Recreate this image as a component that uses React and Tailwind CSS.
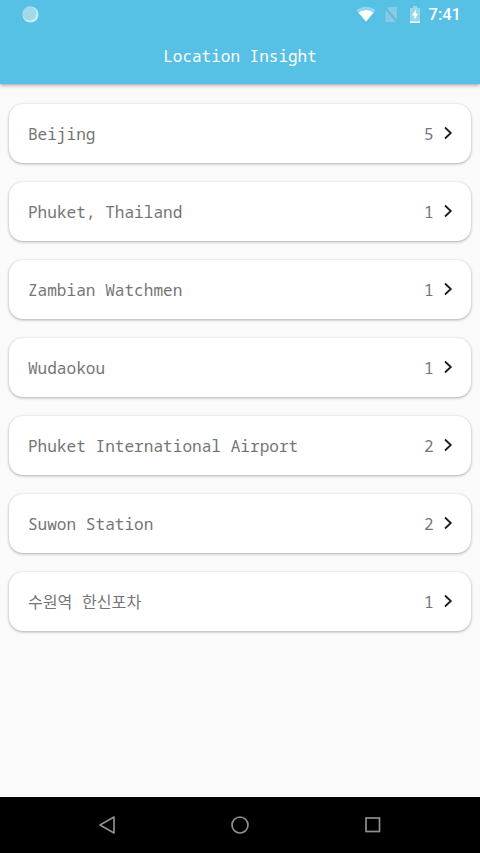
const locations = [
  { name: "Beijing", count: 5 },
  { name: "Phuket, Thailand", count: 1 },
  { name: "Zambian Watchmen", count: 1 },
  { name: "Wudaokou", count: 1 },
  { name: "Phuket International Airport", count: 2 },
  { name: "Suwon Station", count: 2 },
  { name: "수원역 한신포차", count: 1 },
];

function StatusBar() {
  return (
    <div className="flex h-7 items-center justify-between pl-[22px] pr-[19px]">
      <svg width="17" height="17" viewBox="0 0 17 17">
        <circle cx="8.5" cy="8.5" r="8" fill="#c4f1f9" />
        <circle cx="7.6" cy="7.6" r="7" fill="#a3d8e9" />
      </svg>

      <div className="flex items-center">
        {/* Wifi */}
        <svg width="20" height="16" viewBox="0 0 20 16" className="mr-2">
          <path d="M.5 4.2C3.2 2 6.4.8 10 .8s6.8 1.2 9.500 3.400L10 15.500z" fill="#fff" fillOpacity=".35" />
          <path d="M2.500 6.700C4.700 5 7.200 4.200 10 4.200s5.300.8 7.500 2.500L10 15.500z" fill="#fff" />
        </svg>
        {/* No sim */}
        <svg width="15" height="17" viewBox="0 0 15 17" className="mr-[11px]">
          <path d="M5 1h8v13L3.500 3zM1.500 4v12H12z" fill="#84cce6" />
          <path d="M1 2l13 14" stroke="#77abc0" strokeWidth="1" />
        </svg>
        {/* Battery */}
        <svg width="10" height="17" viewBox="0 0 10 17" className="mr-[9px]">
          <path d="M3 0h4v2h3v15H0V2h3z" fill="#9ad7eb" />
          <path d="M0 15.500h10V17H0zM5.800 3.500L2 9.500h2.400V14L8 7.800H5.800z" fill="#fff" />
        </svg>
        <span className="pt-0.5 font-[Roboto,sans-serif] text-[16.5px] leading-7 font-medium text-white">7:41</span>
      </div>
    </div>
  );
}

function LocationCard({ name, count }) {
  return (
    <li className="flex h-[59px] items-center rounded-[14px] bg-white pl-[18.5px] pr-[18px] text-[16.1px] text-[#757575] shadow-[0_1px_3px_rgba(0,0,0,0.3),0_0_1px_rgba(0,0,0,0.12)]">
      <span className="flex-1 pt-px">{name}</span>
      <span className="pt-px">{count}</span>
      <svg width="10" height="14" viewBox="0 0 10 14" className="mb-px ml-[9px]">
        <path d="M2 1.500L7.800 7 2 12.500" fill="none" stroke="#1c1c1c" strokeWidth="1.800" />
      </svg>
    </li>
  );
}

function NavBar() {
  return (
    <nav className="flex h-14 items-center justify-between bg-black px-[97px]">
      <svg width="20" height="20" viewBox="0 0 20 20" fill="none" stroke="#8f8f8f" strokeWidth="1.700">
        <path d="M17 2v16L3 10z" strokeLinejoin="round" />
      </svg>
      <svg width="20" height="20" viewBox="0 0 20 20" fill="none" stroke="#8f8f8f" strokeWidth="1.700">
        <circle cx="10" cy="10" r="8" />
      </svg>
      <svg width="20" height="20" viewBox="0 0 20 20" fill="none" stroke="#8f8f8f" strokeWidth="1.700">
        <rect x="3" y="3" width="13.500" height="13.500" />
      </svg>
    </nav>
  );
}

export default function App() {
  return (
    <div className="flex h-screen flex-col bg-[#fafafa] font-['Noto_Sans_Mono','Noto_Sans_CJK_KR',monospace]">
      <header className="h-[84px] bg-[#57c0e5] shadow-[0_1px_4px_rgba(0,0,0,0.4)]">
        <StatusBar />
        <h1 className="text-center text-base leading-[57px] text-white">Location Insight</h1>
      </header>

      <main className="flex-1">
        <ul className="flex flex-col gap-[19px] px-[9.4px] pt-5">
          {locations.map((item) => (
            <LocationCard key={item.name} name={item.name} count={item.count} />
          ))}
        </ul>
      </main>

      <NavBar />
    </div>
  );
}
